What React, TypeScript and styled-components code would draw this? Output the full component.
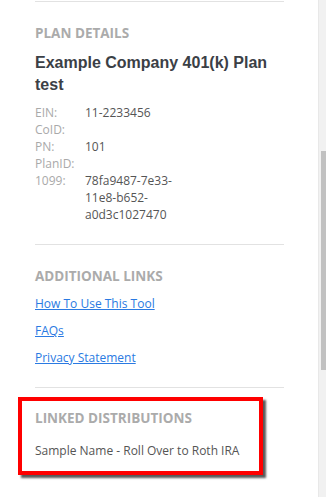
import React from 'react'
import styled, { createGlobalStyle } from 'styled-components'

const GlobalStyle = createGlobalStyle`
  html, body {
    margin: 0;
    padding: 0;
    background: #fff;
  }
  body {
    font-family: 'Open Sans', 'Liberation Sans', sans-serif;
  }
`

const PLAN_FIELDS = [
  { label: 'EIN:', value: '11-2233456' },
  { label: 'CoID:', value: '' },
  { label: 'PN:', value: '101' },
  { label: 'PlanID:', value: '' },
  { label: '1099:', value: '78fa9487-7e33-11e8-b652-a0d3c1027470' },
]

const LINKS = ['How To Use This Tool', 'FAQs', 'Privacy Statement']

export default function App() {
  return (
    <>
      <GlobalStyle />
      <Page>
        <Panel>
          <Divider />
          <Section>
            <SectionTitle>Plan Details</SectionTitle>
            <PlanName>Example Company 401(k) Plan test</PlanName>
            <FieldList>
              {PLAN_FIELDS.map((field) => (
                <React.Fragment key={field.label}>
                  <FieldLabel>{field.label}</FieldLabel>
                  <FieldValue>{field.value}</FieldValue>
                </React.Fragment>
              ))}
            </FieldList>
          </Section>
          <Divider />
          <Section>
            <SectionTitle>Additional Links</SectionTitle>
            <LinkList>
              {LINKS.map((link) => (
                <Link key={link} href="#">
                  {link}
                </Link>
              ))}
            </LinkList>
          </Section>
          <Divider />
          <Highlight>
            <SectionTitle>Linked Distributions</SectionTitle>
            <Distribution>Sample Name - Roll Over to Roth IRA</Distribution>
          </Highlight>
        </Panel>
        <ScrollTrack>
          <ScrollThumb />
        </ScrollTrack>
      </Page>
    </>
  )
}

const Page = styled.div`
  display: flex;
  height: 497px;
  overflow: hidden;
`

const Panel = styled.div`
  flex: 1;
  display: flex;
  flex-direction: column;
  padding: 1px 34px 0 35px;
`

const Divider = styled.hr`
  margin: 0;
  border: none;
  border-top: 1px solid #e2e2e2;
`

const Section = styled.section`
  padding: 22px 0 21px;
`

const SectionTitle = styled.h3`
  margin: 0;
  font-family: 'Open Sans', sans-serif;
  font-size: 13.5px;
  font-weight: 700;
  line-height: 18px;
  color: #ababab;
  text-transform: uppercase;
`

const PlanName = styled.h2`
  margin: 10px 0 8px;
  font-family: 'Liberation Sans', Arial, sans-serif;
  font-size: 16px;
  font-weight: 700;
  line-height: 22px;
  color: #3b4046;
`

const FieldList = styled.dl`
  display: grid;
  grid-template-columns: 50px 100px;
  margin: 0;
  font-size: 12px;
  line-height: 17px;
`

const FieldLabel = styled.dt`
  color: #a9a9a9;
  font-weight: 400;
`

const FieldValue = styled.dd`
  margin: 0;
  color: #555;
`

const LinkList = styled.div`
  display: flex;
  flex-direction: column;
  gap: 10px;
  margin-top: 10px;
`

const Link = styled.a`
  font-size: 12px;
  line-height: 17px;
  color: #2a7ae2;
  text-decoration: underline;
`

const Highlight = styled.section`
  margin: 9px 0 0 -17px;
  width: 224px;
  padding: 8px 0 11px 13px;
  border: 4px solid #ff0000;
  box-shadow: 3px 3px 2px rgba(0, 0, 0, 0.65);
`

const Distribution = styled.p`
  margin: 15px 0 0;
  font-size: 12px;
  line-height: 18px;
  color: #555;
`

const ScrollTrack = styled.div`
  width: 7px;
  background: #f1f1f1;
  border-left: 1px solid #e8e8e8;
  display: flex;
  flex-direction: column;
  align-items: flex-end;
`

const ScrollThumb = styled.div`
  margin-top: 151px;
  width: 5px;
  height: 219px;
  background: #c1c1c1;
`
